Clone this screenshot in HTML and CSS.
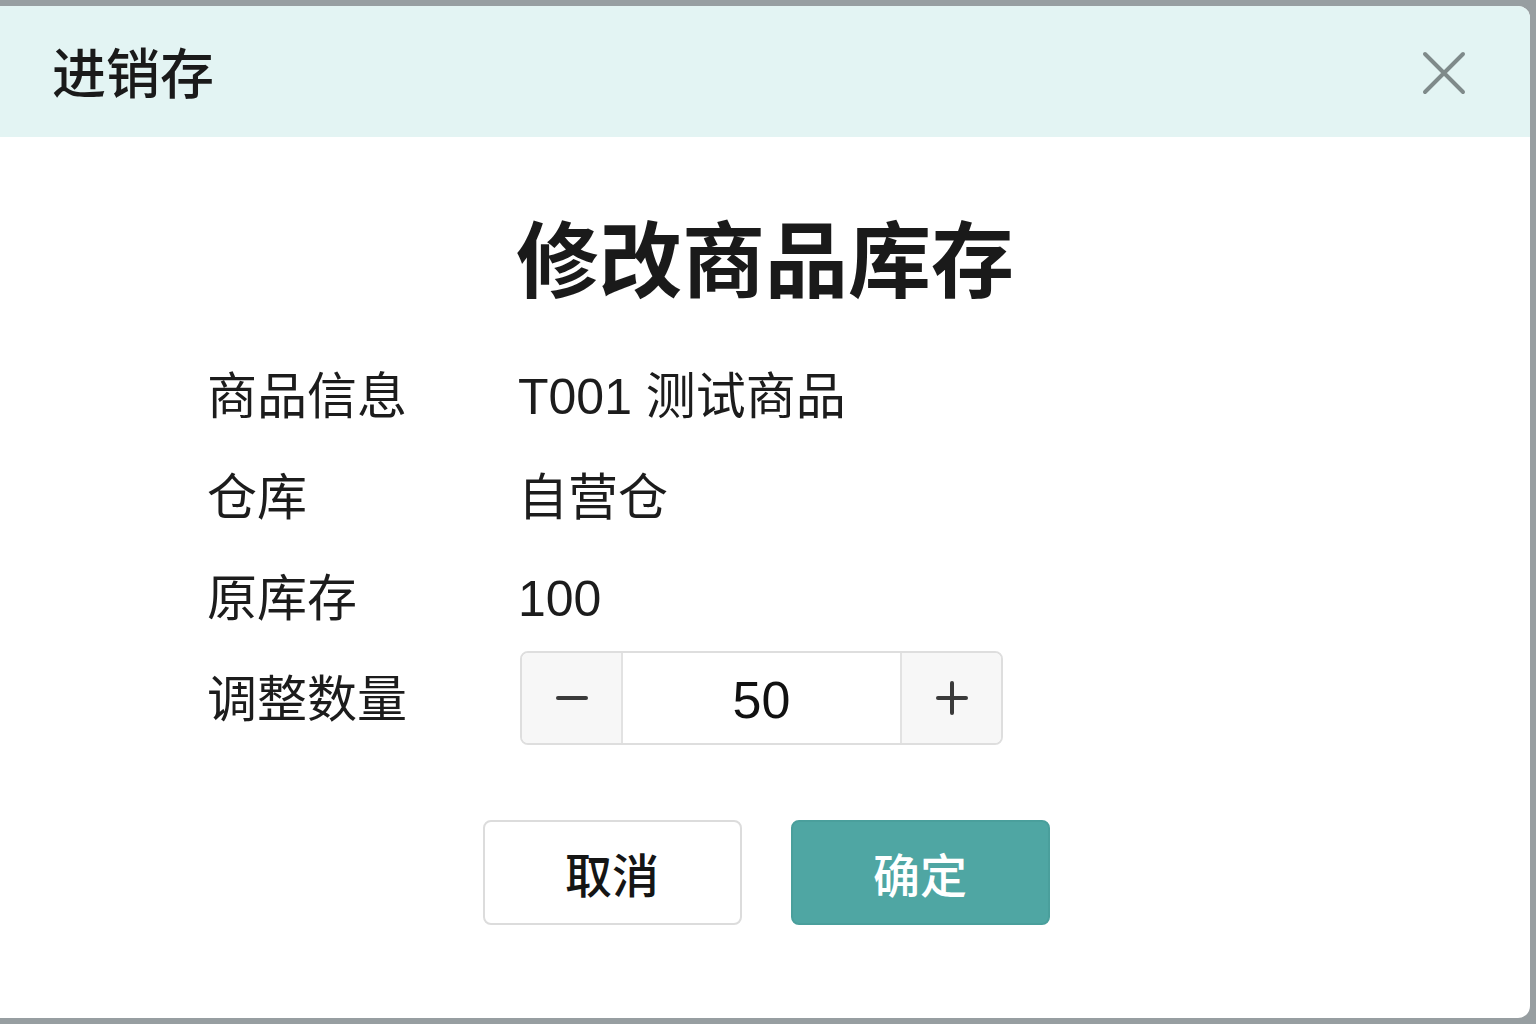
FILE: index.html
```html
<!DOCTYPE html>
<html lang="zh-CN">
<head>
<meta charset="utf-8">
<title>进销存</title>
<link rel="stylesheet" href="styles.css">
</head>
<body>
<div class="dialog">
  <div class="dialog-header">
    <div class="dialog-title">进销存</div>
    <button class="close-btn" aria-label="关闭">
      <svg width="44" height="44" viewBox="0 0 44 44"><path d="M3 3 L41 41 M41 3 L3 41" stroke="#7f8a8a" stroke-width="4" stroke-linecap="round" fill="none"/></svg>
    </button>
  </div>
  <div class="dialog-body">
    <h1 class="page-title">修改商品库存</h1>
    <div class="form">
      <div class="label">商品信息</div><div class="value">T001 测试商品</div>
      <div class="label">仓库</div><div class="value">自营仓</div>
      <div class="label">原库存</div><div class="value">100</div>
      <div class="label">调整数量</div>
      <div class="value stepper-cell">
        <div class="stepper">
          <button class="step-btn minus"><span class="bar"></span></button>
          <div class="step-input">50</div>
          <button class="step-btn plus"><span class="bar"></span><span class="bar v"></span></button>
        </div>
      </div>
    </div>
    <div class="actions">
      <button class="btn btn-cancel">取消</button>
      <button class="btn btn-ok">确定</button>
    </div>
  </div>
</div>
</body>
</html>
```
FILE: styles.css
```css
html, body {
  margin: 0;
  padding: 0;
  background: #979ea1;
  height: 1024px;
  overflow: hidden;
  font-family: "Liberation Sans", "Noto Sans CJK SC", sans-serif;
  color: #1c1c1c;
}
.dialog {
  margin-top: 6px;
  width: 1530px;
  height: 1012px;
  background: #ffffff;
  border-radius: 0 12px 12px 0;
  overflow: hidden;
  display: flex;
  flex-direction: column;
}
.dialog-header {
  height: 131px;
  background: #e3f4f3;
  display: flex;
  align-items: center;
  justify-content: space-between;
  padding: 0 64px 0 52px;
  box-sizing: border-box;
}
.dialog-title {
  font-family: "Noto Sans CJK SC", sans-serif;
  font-size: 54px;
  font-weight: 500;
  line-height: 1;
  color: #1a1a1a;
  margin-top: -2px;
}
.close-btn {
  border: none;
  background: none;
  padding: 0;
  width: 44px;
  height: 44px;
  display: flex;
  margin-top: 2px;
}
.dialog-body {
  display: flex;
  flex-direction: column;
  padding-top: 68px;
}
.page-title {
  margin: 0;
  text-align: center;
  font-family: "Noto Sans CJK SC", sans-serif;
  font-size: 83px;
  font-weight: 700;
  line-height: 100px;
  color: #1a1a1a;
}
.form {
  margin-top: 36px;
  padding-left: 207px;
  display: grid;
  grid-template-columns: 311px 1fr;
  grid-auto-rows: 101px;
  align-items: center;
}
.label, .value {
  font-size: 50px;
  line-height: 1;
  color: #1c1c1c;
}
.label {
  font-family: "Noto Sans CJK SC", sans-serif;
}
.value {
  padding-top: 10px;
}
.value.stepper-cell {
  padding-top: 6px;
}
.stepper {
  display: flex;
  width: 483px;
  height: 94px;
  border: 2px solid #dedede;
  border-radius: 8px;
  box-sizing: border-box;
  overflow: hidden;
  margin-left: 2px;
}
.step-btn {
  width: 101px;
  border: none;
  background: #f7f7f7;
  position: relative;
  padding: 0;
}
.step-btn .bar {
  position: absolute;
  left: 50%;
  top: 50%;
  width: 32px;
  height: 4px;
  margin: -2px 0 0 -16px;
  background: #3a3a3a;
  border-radius: 2px;
}
.step-btn .bar.v {
  width: 4px;
  height: 34px;
  margin: -17px 0 0 -2px;
}
.minus { border-right: 2px solid #e2e2e2; }
.plus { border-left: 2px solid #e2e2e2; }
.step-input {
  flex: 1;
  display: flex;
  align-items: center;
  justify-content: center;
  font-size: 52px;
  color: #111;
  background: #fff;
  padding-top: 4px;
}
.actions {
  margin-top: 75px;
  display: flex;
  justify-content: center;
  gap: 49px;
  padding-left: 2px;
}
.btn {
  width: 259px;
  height: 105px;
  border-radius: 8px;
  font-family: "Noto Sans CJK SC", sans-serif;
  font-size: 47px;
  font-weight: 500;
  box-sizing: border-box;
  padding: 0;
}
.btn-cancel {
  background: #ffffff;
  border: 2px solid #dcdcdc;
  color: #151515;
}
.btn-ok {
  background: #4fa6a3;
  border: 2px solid #4a9f9c;
  color: #ffffff;
}
```
